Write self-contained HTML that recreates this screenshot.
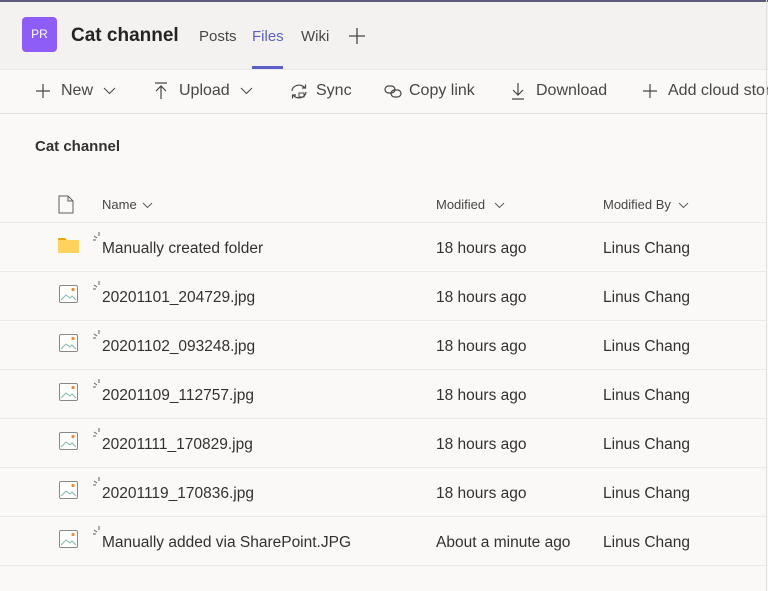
<!DOCTYPE html>
<html><head><meta charset="utf-8">
<style>
*{box-sizing:border-box;margin:0;padding:0}
body{width:768px;height:591px;overflow:hidden;background:#faf9f8;font-family:"Liberation Sans",sans-serif;position:relative;color:#252423}
.top{position:absolute;left:0;top:0;width:768px;height:2px;background:#5b5a7a}
.hdr{position:absolute;left:0;top:2px;width:768px;height:67px;background:#f3f2f1}
.badge{position:absolute;left:22px;top:17px;width:35px;height:35px;border-radius:4px;background:#8e5cf7;color:#fff;font-size:12px;text-align:center;line-height:35px}
.title{position:absolute;left:71px;top:25px;font-size:19px;font-weight:bold;color:#252423}
.tab{position:absolute;top:28px;font-size:15px;color:#484644}
.tb{position:absolute;left:0;top:69px;width:768px;height:45px;background:#faf9f8;border-top:1px solid #ebe9e7;border-bottom:1px solid #e1dfdd}
.ti{position:absolute;top:82px;font-size:16px;color:#484644}
svg{position:absolute}
.h2{position:absolute;left:35px;top:138px;font-size:15px;font-weight:bold;color:#323130}
.col{position:absolute;top:197px;font-size:13px;color:#484644}
.line{position:absolute;left:0;width:766px;height:1px;background:#edebe9}
.cell{position:absolute;font-size:15.5px;color:#323130;margin-top:1px}
.vr{position:absolute;left:766px;top:0;width:1px;height:591px;background:#e1dfdd}
</style></head><body>
<div class="top"></div>
<div class="hdr"></div>
<div class="badge">PR</div>
<div class="title">Cat channel</div>
<div class="tab" style="left:199px">Posts</div>
<div class="tab" style="left:252px;color:#5b5fc7">Files</div>
<div style="position:absolute;left:252px;top:66px;width:31px;height:3px;background:#5b5fc7"></div>
<div class="tab" style="left:301px">Wiki</div>
<svg style="left:348px;top:27px" width="18" height="18"><path d="M9 1v16M1 9h16" stroke="#484644" stroke-width="1.3"/></svg>
<div class="tb"></div>
<svg style="left:35px;top:83px" width="16" height="16"><path d="M8 1v14M1 8h14" stroke="#484644" stroke-width="1.2" fill="none"/></svg>
<div class="ti" style="left:61px">New</div>
<svg style="left:103px;top:87px" width="13" height="8"><path d="M1 1l5.5 5.5L12 1" stroke="#484644" fill="none"/></svg>
<svg style="left:154px;top:82px" width="14" height="18"><path d="M1 1h12M7 4v13M2 9l5-5 5 5" stroke="#484644" stroke-width="1.2" fill="none"/></svg>
<div class="ti" style="left:179px">Upload</div>
<svg style="left:240px;top:87px" width="13" height="8"><path d="M1 1l5.5 5.5L12 1" stroke="#484644" fill="none"/></svg>
<svg style="left:290px;top:83px" width="18" height="17"><path d="M2 8a7 6 0 0 1 13-3M16 9a7 6 0 0 1-13 3M12 5h3.5V1.5M6 12H2.5v3.5" stroke="#484644" stroke-width="1.2" fill="none"/><rect x="9" y="10" width="5" height="4" stroke="#484644" fill="none"/></svg>
<div class="ti" style="left:316px">Sync</div>
<svg style="left:384px;top:85px" width="18" height="13"><rect x="1" y="1" width="10" height="7" rx="3.5" stroke="#484644" stroke-width="1.2" fill="none"/><rect x="7" y="5" width="10" height="7" rx="3.5" stroke="#484644" stroke-width="1.2" fill="none"/></svg>
<div class="ti" style="left:409px">Copy link</div>
<svg style="left:511px;top:82px" width="14" height="18"><path d="M7 1v12M2 8l5 5 5-5M1 17h12" stroke="#484644" stroke-width="1.2" fill="none"/></svg>
<div class="ti" style="left:536px">Download</div>
<svg style="left:642px;top:83px" width="16" height="16"><path d="M8 1v14M1 8h14" stroke="#484644" stroke-width="1.2" fill="none"/></svg>
<div class="ti" style="left:668px;white-space:nowrap">Add cloud storage</div>
<div class="h2">Cat channel</div>
<svg style="left:58px;top:195px" width="16" height="19"><path d="M1 1h9l5 5v12H1z M10 1v5h5" stroke="#605e5c" stroke-width="1" fill="none"/></svg>
<div class="col" style="left:102px">Name</div>
<svg style="left:142px;top:202px" width="11" height="7"><path d="M1 1l4.5 4.5L10 1" stroke="#605e5c" fill="none"/></svg>
<div class="col" style="left:436px">Modified</div>
<svg style="left:494px;top:202px" width="11" height="7"><path d="M1 1l4.5 4.5L10 1" stroke="#605e5c" fill="none"/></svg>
<div class="col" style="left:603px">Modified By</div>
<svg style="left:678px;top:202px" width="11" height="7"><path d="M1 1l4.5 4.5L10 1" stroke="#605e5c" fill="none"/></svg>
<div class="line" style="top:222px"></div>
<div class="line" style="top:271px"></div>
<div class="line" style="top:320px"></div>
<div class="line" style="top:369px"></div>
<div class="line" style="top:418px"></div>
<div class="line" style="top:467px"></div>
<div class="line" style="top:516px"></div>
<div class="line" style="top:565px"></div>
<div class="vr"></div>

<svg style="left:58px;top:237px" width="21" height="16"><path d="M0 2a1 1 0 0 1 1-1h6l2 2H0z" fill="#e8a600"/><rect x="0" y="3" width="21" height="13" rx="1" fill="#ffd25c"/></svg>

<div class="cell" style="left:102px;top:239px">Manually created folder</div><div class="cell" style="left:436px;top:239px">18 hours ago</div><div class="cell" style="left:603px;top:239px">Linus Chang</div>
<div class="cell" style="left:102px;top:288px">20201101_204729.jpg</div><div class="cell" style="left:436px;top:288px">18 hours ago</div><div class="cell" style="left:603px;top:288px">Linus Chang</div>
<div class="cell" style="left:102px;top:337px">20201102_093248.jpg</div><div class="cell" style="left:436px;top:337px">18 hours ago</div><div class="cell" style="left:603px;top:337px">Linus Chang</div>
<div class="cell" style="left:102px;top:386px">20201109_112757.jpg</div><div class="cell" style="left:436px;top:386px">18 hours ago</div><div class="cell" style="left:603px;top:386px">Linus Chang</div>
<div class="cell" style="left:102px;top:435px">20201111_170829.jpg</div><div class="cell" style="left:436px;top:435px">18 hours ago</div><div class="cell" style="left:603px;top:435px">Linus Chang</div>
<div class="cell" style="left:102px;top:484px">20201119_170836.jpg</div><div class="cell" style="left:436px;top:484px">18 hours ago</div><div class="cell" style="left:603px;top:484px">Linus Chang</div>
<div class="cell" style="left:102px;top:533px">Manually added via SharePoint.JPG</div><div class="cell" style="left:436px;top:533px">About a minute ago</div><div class="cell" style="left:603px;top:533px">Linus Chang</div>

<svg style="left:93px;top:232px" width="10" height="10"><path d="M6 0v4M1 4l3 2M0 8h3" stroke="#605e5c" fill="none"/></svg>
<svg style="left:93px;top:281px" width="10" height="10"><path d="M6 0v4M1 4l3 2M0 8h3" stroke="#605e5c" fill="none"/></svg>
<svg style="left:93px;top:330px" width="10" height="10"><path d="M6 0v4M1 4l3 2M0 8h3" stroke="#605e5c" fill="none"/></svg>
<svg style="left:93px;top:379px" width="10" height="10"><path d="M6 0v4M1 4l3 2M0 8h3" stroke="#605e5c" fill="none"/></svg>
<svg style="left:93px;top:428px" width="10" height="10"><path d="M6 0v4M1 4l3 2M0 8h3" stroke="#605e5c" fill="none"/></svg>
<svg style="left:93px;top:477px" width="10" height="10"><path d="M6 0v4M1 4l3 2M0 8h3" stroke="#605e5c" fill="none"/></svg>
<svg style="left:93px;top:526px" width="10" height="10"><path d="M6 0v4M1 4l3 2M0 8h3" stroke="#605e5c" fill="none"/></svg>

<svg style="left:59px;top:285px" width="19" height="18"><rect x="0.5" y="0.5" width="18" height="17" rx="1.5" fill="#fff" stroke="#8a8886"/><path d="M2 15l5-5 4 3 2-2 4 4" stroke="#7fb8ae" fill="none"/><circle cx="14" cy="4.5" r="1.6" fill="#f08a24"/></svg>
<svg style="left:59px;top:334px" width="19" height="18"><rect x="0.5" y="0.5" width="18" height="17" rx="1.5" fill="#fff" stroke="#8a8886"/><path d="M2 15l5-5 4 3 2-2 4 4" stroke="#7fb8ae" fill="none"/><circle cx="14" cy="4.5" r="1.6" fill="#f08a24"/></svg>
<svg style="left:59px;top:383px" width="19" height="18"><rect x="0.5" y="0.5" width="18" height="17" rx="1.5" fill="#fff" stroke="#8a8886"/><path d="M2 15l5-5 4 3 2-2 4 4" stroke="#7fb8ae" fill="none"/><circle cx="14" cy="4.5" r="1.6" fill="#f08a24"/></svg>
<svg style="left:59px;top:432px" width="19" height="18"><rect x="0.5" y="0.5" width="18" height="17" rx="1.5" fill="#fff" stroke="#8a8886"/><path d="M2 15l5-5 4 3 2-2 4 4" stroke="#7fb8ae" fill="none"/><circle cx="14" cy="4.5" r="1.6" fill="#f08a24"/></svg>
<svg style="left:59px;top:481px" width="19" height="18"><rect x="0.5" y="0.5" width="18" height="17" rx="1.5" fill="#fff" stroke="#8a8886"/><path d="M2 15l5-5 4 3 2-2 4 4" stroke="#7fb8ae" fill="none"/><circle cx="14" cy="4.5" r="1.6" fill="#f08a24"/></svg>
<svg style="left:59px;top:530px" width="19" height="18"><rect x="0.5" y="0.5" width="18" height="17" rx="1.5" fill="#fff" stroke="#8a8886"/><path d="M2 15l5-5 4 3 2-2 4 4" stroke="#7fb8ae" fill="none"/><circle cx="14" cy="4.5" r="1.6" fill="#f08a24"/></svg>
</body></html>
